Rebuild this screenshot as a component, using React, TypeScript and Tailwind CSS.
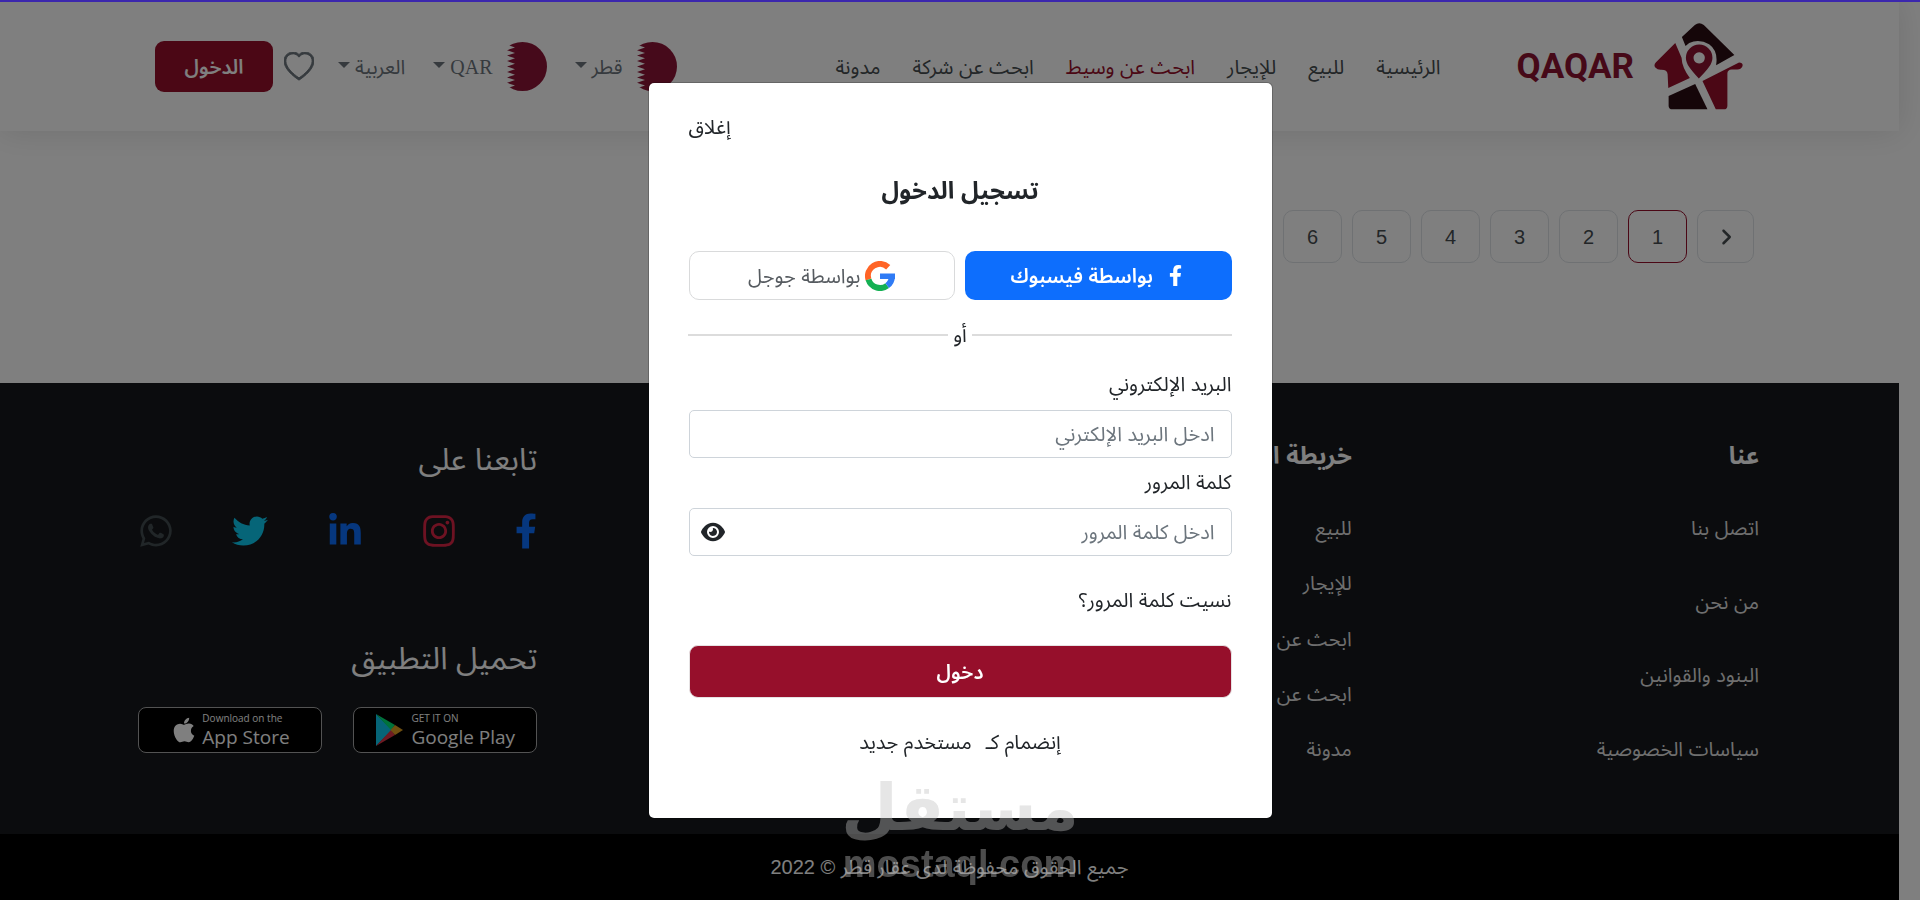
import { useState } from 'react';
import { FaApple, FaFacebookF, FaInstagram, FaLinkedinIn, FaTwitter, FaWhatsapp } from 'react-icons/fa';
import { FaAngleRight, FaEye } from 'react-icons/fa6';
import { BsHeart } from 'react-icons/bs';

const navLinks = ['الرئيسية', 'للبيع', 'للإيجار', 'ابحث عن وسيط', 'ابحث عن شركة', 'مدونة'];
const activeLink = 'ابحث عن وسيط';
const pages = [1, 2, 3, 4, 5, 6];
const aboutLinks = ['اتصل بنا', 'من نحن', 'البنود والقوانين', 'سياسات الخصوصية'];
const siteLinks = ['للبيع', 'للإيجار', 'ابحث عن وسيط', 'ابحث عن شركة', 'مدونة'];

function HouseLogo() {
  return (
    <svg viewBox="42 38 268 262" className="w-[89px] h-[87px]" aria-hidden="true">
      <path
        fill="#2b0c12"
        d="M126 80 L165 44 Q178 34 192 44 L284 134 L229 165 Q236 122 208 102 Q178 84 148 98 L137 107 Z"
      />
      <path fill="#960f2b" d="M106 98 L48 156 Q40 164 46 172 Q52 179 62 179 Q82 178 83 192 L85 234 L150 204 Q126 172 125 143 Z" />
      <path
        fill="#8c1230"
        fillRule="evenodd"
        d="M177 205 C152 178 138 162 138 143 A40 40 0 1 1 218 143 C218 162 204 178 177 205 Z M178 126 a17 17 0 1 0 0.1 0 Z"
      />
      <path fill="#2b0c12" d="M86 258 L166 222 L203 298 L98 298 Q86 298 86 287 Z" />
      <path
        fill="#960f2b"
        d="M188 213 L298 157 Q312 158 308 169 Q304 178 293 178 L276 178 Q263 179 263 190 L263 287 Q263 298 252 298 L228 298 Z"
      />
    </svg>
  );
}

function QatarFlag() {
  return (
    <svg viewBox="0 0 49 49" className="size-[49px]" aria-hidden="true">
      <clipPath id="flag-round">
        <circle cx="24.5" cy="24.5" r="24.5" />
      </clipPath>
      <g clipPath="url(#flag-round)">
        <rect width="49" height="49" fill="#fff" />
        <path
          fill="#8d1537"
          d="M49 0 H17 L9 2.7 L17 5.4 L9 8.2 L17 10.9 L9 13.6 L17 16.3 L9 19.1 L17 21.8 L9 24.5 L17 27.2 L9 29.9 L17 32.7 L9 35.4 L17 38.1 L9 40.8 L17 43.6 L9 46.3 L17 49 H49 Z"
        />
      </g>
    </svg>
  );
}

function GoogleIcon() {
  return (
    <svg viewBox="0 0 30 30" className="size-[30px]" fill="none" strokeWidth="6" aria-hidden="true">
      <path stroke="#ff6426" d="M23.2 6.2 A12 12 0 0 0 3.5 18.5" />
      <path stroke="#14b053" d="M3.5 18.5 A12 12 0 0 0 22.2 24.6" />
      <path stroke="#2f7bf5" d="M22.2 24.6 A12 12 0 0 0 27 15.5" />
      <path fill="#2f7bf5" d="M15 12.5 H30 V18 H15 Z" />
    </svg>
  );
}

function PlayIcon() {
  return (
    <svg viewBox="0 0 28 32" className="w-7 h-8" aria-hidden="true">
      <path fill="#0dcaf0" d="M1 0 L17 16 L1 32 Z" />
      <path fill="#00e676" d="M1 0 L20 11 L16 16 Z" />
      <path fill="#dc3545" d="M1 32 L20 21 L16 16 Z" />
      <path fill="#e0a020" d="M20 11 L28 16 L20 21 L15.500 16 Z" />
    </svg>
  );
}

function Caret() {
  return <span className="border-x-6 border-t-6 border-x-transparent border-t-[#6c757d] mb-1" />;
}

function Header() {
  return (
    <header className="relative flex h-[131px] items-center justify-between bg-white pt-0.5 pr-[156px] pl-[155px] shadow-[0_0_32px_rgba(0,0,0,0.12)]">
      <div className="flex items-center gap-[76px]">
        <a href="#" className="flex items-center gap-5 text-[#8c1230]">
          <HouseLogo />
          <span className="font-['Roboto'] text-[35px] leading-10 font-bold">QAQAR</span>
        </a>
        <nav className="flex gap-8">
          {navLinks.map(link => (
            <a key={link} href="#" className={link === activeLink ? 'text-[#960f2b]' : 'text-[#464d50]'}>
              {link}
            </a>
          ))}
        </nav>
      </div>
      <div className="flex items-center text-[#6c757d]">
        <button className="flex items-center gap-[5px]">
          <QatarFlag />
          <span>قطر</span>
          <Caret />
        </button>
        <button className="mr-7 flex items-center gap-[5px]">
          <QatarFlag />
          <span className="font-['Liberation_Serif']">QAR</span>
          <Caret />
        </button>
        <button className="mr-7 flex items-center gap-[5px]">
          <span>العربية</span>
          <Caret />
        </button>
        <button aria-label="المفضلة" className="mr-6">
          <BsHeart className="size-[30px]" stroke="currentColor" strokeWidth="0.5" />
        </button>
        <button className="mr-[11px] h-[51px] w-[118px] rounded-[9px] bg-[#960f2b] font-semibold text-white">
          الدخول
        </button>
      </div>
    </header>
  );
}

function Pagination() {
  return (
    <nav className="flex items-center gap-[10px] pt-[79px] pr-[145px] pb-[120px] text-[#464d50]">
      <a href="#" aria-label="السابق" className="flex h-[53px] w-[57px] items-center justify-center rounded-[10px] border border-[#dee2e6]">
        <FaAngleRight className="size-5" />
      </a>
      {pages.map(page => (
        <a
          key={page}
          href="#"
          className={
            page === 1
              ? 'flex h-[53px] w-[59px] items-center justify-center rounded-[10px] border border-[#960f2b]'
              : 'flex h-[53px] w-[59px] items-center justify-center rounded-[10px] border border-[#dee2e6]'
          }
        >
          {page}
        </a>
      ))}
      <span>...</span>
    </nav>
  );
}

function LinkColumn({ title, links }: { title: string; links: string[] }) {
  return (
    <div>
      <h2 className="text-2xl leading-8 font-bold text-white">{title}</h2>
      <ul className="mt-11 flex h-[245px] flex-col justify-between text-[#dedede]">
        {links.map(link => (
          <li key={link}>
            <a href="#">{link}</a>
          </li>
        ))}
      </ul>
    </div>
  );
}

function Footer() {
  return (
    <footer>
      <div className="grid grid-cols-4 gap-2 bg-[#16191d] pr-[140px] pl-[138px] pt-[57px] pb-[73px]">
        <LinkColumn title="عنا" links={aboutLinks} />
        <LinkColumn title="خريطة الموقع" links={siteLinks} />
        <div className="col-start-4 text-white">
          <h2 className="text-[31px] leading-10">تابعنا على</h2>
          <div className="mt-[33px] flex h-9 items-center justify-between">
            <a href="#" aria-label="Facebook" className="text-[#0d6efd]"><FaFacebookF className="w-[22px] h-9" /></a>
            <a href="#" aria-label="Instagram" className="text-[#dc2545]"><FaInstagram className="size-9" /></a>
            <a href="#" aria-label="LinkedIn" className="text-[#0d6efd]"><FaLinkedinIn className="size-9" /></a>
            <a href="#" aria-label="Twitter" className="text-[#0dcaf0]"><FaTwitter className="size-9" /></a>
            <a href="#" aria-label="WhatsApp" className="text-[#434d50]"><FaWhatsapp className="size-9" /></a>
          </div>
          <h2 className="mt-[90px] text-[31px] leading-10">تحميل التطبيق</h2>
          <div dir="ltr" className="mt-7 flex justify-between font-['Open_Sans']">
            <a href="#" className="flex h-[46px] w-[184px] items-center justify-center gap-1 rounded-lg border border-[#a6a6a6] bg-black">
              <FaApple className="size-7" />
              <span className="flex flex-col">
                <span className="text-[10px] leading-[14px]">Download on the</span>
                <span className="text-[19px] leading-6">App Store</span>
              </span>
            </a>
            <a href="#" className="flex h-[46px] w-[184px] items-center justify-center gap-2 rounded-lg border border-[#a6a6a6] bg-black">
              <PlayIcon />
              <span className="flex flex-col">
                <span className="text-[10px] leading-[14px]">GET IT ON</span>
                <span className="text-[19px] leading-6">Google Play</span>
              </span>
            </a>
          </div>
        </div>
      </div>
      <p className="bg-black py-[21px] text-center text-white">جميع الحقوق محفوظة لدى عقار قطر © 2022</p>
    </footer>
  );
}

function LoginModal() {
  const [showPassword, setShowPassword] = useState(false);

  return (
    <div className="fixed inset-0 flex items-start justify-center bg-black/50 pt-[82px]">
      <div
        role="dialog"
        aria-modal="true"
        aria-labelledby="login-title"
        className="flex w-full max-w-[625px] flex-col rounded-md border border-black/20 bg-white bg-clip-padding px-10 pt-8 pb-16 text-[#212529]"
      >
        <button className="self-end">إغلاق</button>
        <h1 id="login-title" className="mt-9 text-center text-2xl leading-8 font-bold">تسجيل الدخول</h1>

        <div className="mt-11 grid grid-cols-2 gap-[10px]">
          <button className="flex h-[49px] items-center justify-center gap-3 rounded-[10px] bg-[#0d6efd] font-semibold text-white">
            <FaFacebookF className="size-[21px]" />
            بواسطة فيسبوك
          </button>
          <button className="flex h-[49px] items-center justify-center gap-[5px] rounded-[10px] border border-[#d9dadb] text-[#565b60]">
            <GoogleIcon />
            بواسطة جوجل
          </button>
        </div>

        <div className="mt-[23px] flex items-center gap-[5px]">
          <span className="h-0.5 flex-1 bg-[#dcdcdc]" />
          <span>أو</span>
          <span className="h-0.5 flex-1 bg-[#dcdcdc]" />
        </div>

        <form className="mt-[25px] flex flex-col" onSubmit={e => e.preventDefault()}>
          <label htmlFor="email">البريد الإلكتروني</label>
          <input
            id="email"
            type="text"
            placeholder="ادخل البريد الإلكترني"
            className="mt-[14px] h-12 rounded-[5px] border border-[#ced4da] px-4 placeholder:text-[#6c757d]"
          />
          <label htmlFor="password" className="mt-3">كلمة المرور</label>
          <div className="relative mt-[14px]">
            <input
              id="password"
              type={showPassword ? 'text' : 'password'}
              placeholder="ادخل كلمة المرور"
              className="h-12 w-full rounded-[5px] border border-[#ced4da] px-4 placeholder:text-[#6c757d]"
            />
            <button
              type="button"
              aria-label="إظهار كلمة المرور"
              onClick={() => setShowPassword(!showPassword)}
              className="absolute top-3 left-3"
            >
              <FaEye className="size-6" />
            </button>
          </div>
          <a href="#" className="mt-8 self-start">نسيت كلمة المرور؟</a>
          <button className="mt-[33px] h-[53px] rounded-[9px] border border-[#e6e2e3] bg-[#960f2b] font-semibold text-white">
            دخول
          </button>
        </form>
        <p className="mt-8 text-center">
          إنضمام كـ <a href="#" className="mr-2">مستخدم جديد</a>
        </p>
      </div>
    </div>
  );
}

function Watermark() {
  return (
    <div className="pointer-events-none fixed inset-x-0 bottom-4 flex flex-col items-center font-bold text-[#c0c0c0] opacity-40">
      <span className="font-['DejaVu_Sans'] text-[65px] leading-[72px]">مستقل</span>
      <span className="text-[38px] leading-10">mostaql.com</span>
    </div>
  );
}

export default function App() {
  return (
    <div
      dir="rtl"
      className="min-h-screen bg-white pr-0 pl-0 font-['Liberation_Sans','Noto_Sans_Arabic','DejaVu_Sans_Condensed',sans-serif] text-xl leading-6"
    >
      <div className="mr-[21px]">
        <Header />
        <Pagination />
        <Footer />
      </div>
      <LoginModal />
      <Watermark />
      <div className="fixed inset-x-0 top-0 h-0.5 bg-[#3b27ad]" />
    </div>
  );
}
